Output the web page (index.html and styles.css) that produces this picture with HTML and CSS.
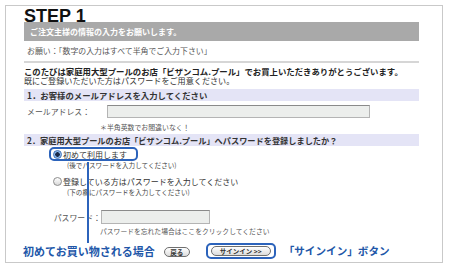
FILE: index.html
```html
<!DOCTYPE html>
<html>
<head>
<meta charset="utf-8">
<title>STEP 1</title>
<link rel="stylesheet" href="styles.css">
</head>
<body>
<div class="frame">
    <h1 class="step">STEP 1</h1>
    <div class="title-bar">ご注文主様の情報の入力をお願いします。</div>
    <p class="notice">お願い：「数字の入力はすべて半角でご入力下さい」</p>
    <div class="rule"></div>

    <div class="thanks">
        <p class="thanks-main">このたびは家庭用大型プールのお店「ビザンコム.プール」でお買上いただきありがとうございます。</p>
        <p class="thanks-sub">既にご登録いただいた方はパスワードをご用意ください。</p>
    </div>

    <div class="sec">1．お客様のメールアドレスを入力してください</div>
    <div class="field-row">
        <span class="label mail-label">メールアドレス：</span>
        <span class="input mail-input"></span>
    </div>
    <div class="note">＊半角英数でお間違いなく！</div>

    <div class="sec sec-two">2．家庭用大型プールのお店「ビザンコム.プール」へパスワードを登録しましたか？</div>
    <div class="choice-row first-choice">
        <span class="choice-hl"><span class="radio checked"></span>初めて利用します</span>
    </div>
    <div class="sub-note">(後でパスワードを入力してください)</div>
    <div class="choice-row second-choice">
        <span class="choice"><span class="radio"></span>登録している方はパスワードを入力してください</span>
    </div>
    <div class="sub-note">(下の欄にパスワードを入力してください)</div>

    <div class="field-row pass-row">
        <span class="label pass-label">パスワード：</span>
        <span class="input pass-input"></span>
    </div>
    <div class="note forgot">パスワードを忘れた場合はここをクリックしてください</div>

    <div class="actions">
        <span class="callout callout-first">初めてお買い物される場合</span>
        <span class="btn back">戻る</span>
        <span class="btn-hl"><span class="btn signin">サインイン &gt;&gt;</span></span>
        <span class="callout callout-last">「サインイン」ボタン</span>
    </div>

    <div class="pointer"></div>
</div>
</body>
</html>
```

FILE: styles.css
```css
html, body {
    margin: 0;
    padding: 0;
    background: #fff;
}
body {
    padding: 5px;
    font-family: "Noto Sans CJK JP", sans-serif;
    color: #444;
}
p {
    margin: 0;
}

.frame {
    position: relative;
    box-sizing: border-box;
    width: 438px;
    border: 1px solid #c9c9c9;
    padding: 0 23px 0 18px;
}

.step {
    margin: 0;
    height: 16px;
    line-height: 20px;
    font-family: "Liberation Sans", Arial, sans-serif;
    font-size: 18px;
    font-weight: bold;
    color: #111;
    position: relative;
    z-index: 1;
}

.title-bar {
    height: 19px;
    line-height: 19px;
    background: #a9a9a9;
    color: #fff;
    font-size: 8px;
    font-weight: bold;
    padding-left: 6px;
}

.notice {
    height: 20px;
    line-height: 20px;
    padding-left: 3px;
    font-size: 7.9px;
    color: #555;
}

.rule {
    height: 2px;
    background: #d6d6d6;
}

.thanks {
    padding: 3px 0 3px 0;
}
.thanks p {
    line-height: 10px;
    height: 10px;
    white-space: nowrap;
}
.thanks-main {
    font-size: 8.4px;
    font-weight: bold;
    color: #222;
}
.thanks-sub {
    font-size: 8.1px;
    color: #333;
}

.sec {
    height: 12px;
    line-height: 12px;
    background: #e4e4f6;
    padding-left: 3px;
    font-size: 8.4px;
    font-weight: bold;
    color: #333;
    white-space: nowrap;
}
.sec-two {
    margin-top: 1px;
    font-size: 8.2px;
}

.field-row {
    display: flex;
    align-items: center;
    height: 20px;
}
.label {
    font-size: 7.9px;
    color: #555;
    box-sizing: border-box;
}
.mail-label {
    width: 83px;
    padding-left: 3px;
}
.input {
    display: block;
    box-sizing: border-box;
    height: 13px;
    background: #eceeec;
    border: 1px solid #b4b4b4;
    border-top-color: #8a8a8a;
}
.mail-input {
    width: 263px;
}

.note {
    height: 12px;
    line-height: 12px;
    padding-left: 76px;
    font-size: 6.9px;
    color: #555;
}

.choice-row {
    display: flex;
    align-items: center;
    font-size: 8px;
    color: #333;
}
.first-choice {
    padding-left: 25px;
    height: 14px;
    margin-top: 1px;
}
.choice-hl {
    display: flex;
    align-items: center;
    box-sizing: border-box;
    width: 89px;
    height: 14px;
    border: 2px solid #2c63bb;
    border-radius: 5px;
    padding-left: 2px;
}
.second-choice {
    padding-left: 29px;
    height: 14px;
    margin-top: 4px;
}
.choice {
    display: flex;
    align-items: center;
}
.radio {
    display: inline-block;
    box-sizing: border-box;
    width: 9px;
    height: 9px;
    border-radius: 50%;
    border: 1px solid #8c8c8c;
    background: linear-gradient(#fefefe, #d8d8d8);
    margin-right: 1px;
}
.radio.checked {
    border-color: #3a6fb8;
    background: radial-gradient(circle, #1b2b4a 0, #1b2b4a 2px, #7fb0e8 2.5px, #bcd6f3 4px);
}

.sub-note {
    height: 9px;
    line-height: 9px;
    padding-left: 43px;
    font-size: 6.6px;
    color: #444;
}

.pass-row {
    height: 14px;
    margin-top: 13px;
}
.pass-label {
    width: 77px;
    text-align: right;
}
.pass-input {
    width: 109px;
    height: 14px;
}

.forgot {
    height: 14px;
    line-height: 14px;
    font-size: 6.8px;
}

.actions {
    display: flex;
    align-items: center;
    height: 24px;
    padding-top: 1px;
    box-sizing: border-box;
}
.callout {
    font-size: 11px;
    font-weight: bold;
    color: #2156a8;
    white-space: nowrap;
}
.callout-first {
    margin-left: -1px;
}
.btn {
    display: flex;
    align-items: center;
    justify-content: center;
    box-sizing: border-box;
    height: 10px;
    border: 1px solid #6f6f6f;
    border-radius: 5px;
    background: linear-gradient(#ffffff, #dcdcdc);
    font-size: 6.5px;
    font-weight: bold;
    color: #333;
    white-space: nowrap;
}
.back {
    width: 26px;
    margin-left: 9px;
    margin-top: 2px;
}
.btn-hl {
    display: flex;
    align-items: center;
    justify-content: center;
    box-sizing: border-box;
    width: 70px;
    height: 16px;
    margin-left: 16px;
    border: 2px solid #2c63bb;
    border-radius: 5px;
}
.signin {
    width: 60px;
}
.callout-last {
    margin-left: 8px;
    font-size: 10.6px;
}

.pointer {
    position: absolute;
    left: 81px;
    top: 156px;
    width: 2px;
    height: 81px;
    background: #2c63bb;
}
```
